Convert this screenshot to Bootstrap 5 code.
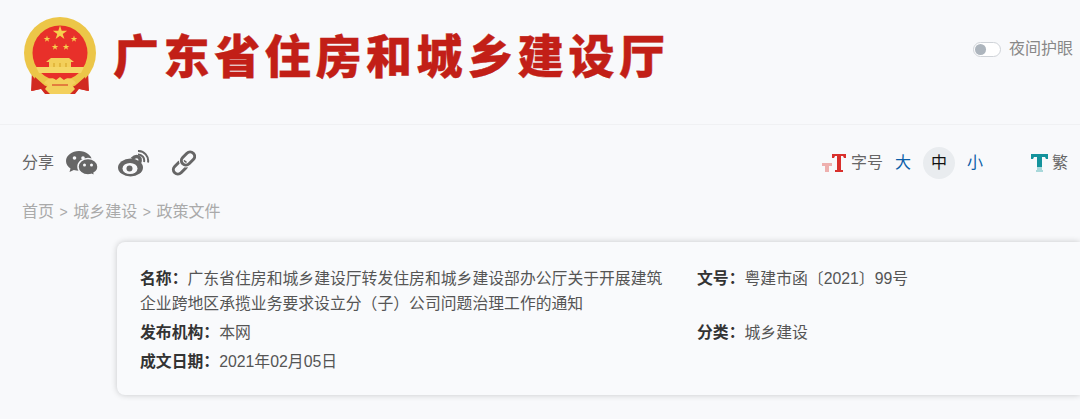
<!DOCTYPE html>
<html lang="zh-CN">
<head>
  <meta charset="UTF-8">
  <title>广东省住房和城乡建设厅</title>
  <meta name="viewport" content="width=device-width, initial-scale=1">
  <link href="https://cdn.jsdelivr.net/npm/bootstrap@5.3.3/dist/css/bootstrap.min.css" rel="stylesheet">
  <script src="https://cdn.jsdelivr.net/npm/bootstrap@5.3.3/dist/js/bootstrap.bundle.min.js"></script>
  <style>
    html, body { height: 100%; overflow: hidden; }
    body { background: #f8f9fb; font-family: "Liberation Sans", "Noto Sans CJK SC", sans-serif; font-size: 16px; color: #555; }
    .site-head { height: 125px; padding: 17px 7px 0 23px; border-bottom: 1px solid #f0f1f3; }
    .site-title { margin: 0 0 6px 16px; font-family: "Noto Sans CJK SC", sans-serif; font-size: 46px; font-weight: 900; line-height: 70px; letter-spacing: 4.6px; color: #c21f17; -webkit-text-stroke: .4px #c21f17; white-space: nowrap; }
    .night-switch { margin: 22px 0 0; padding: 0; min-height: 0; color: #888; line-height: 20px; }
    .night-switch .form-check-input { float: none; width: 28px; height: 15px; margin: 0 8px 0 0; background-color: #fff; border-color: #cfd3d8;
      --bs-form-switch-bg: url("data:image/svg+xml,%3csvg xmlns='http://www.w3.org/2000/svg' viewBox='-4 -4 8 8'%3e%3ccircle r='3.4' fill='%23adb5bd'/%3e%3c/svg%3e"); }
    .tool-row { height: 74px; padding: 2px 12px 0 22px; }
    .share-txt { color: #666; margin-right: 12px; }
    .share-icons { gap: 20px; }
    .tool-t { color: #666; }
    .size-link { width: 32px; height: 32px; line-height: 32px; text-align: center; border-radius: 50%; color: #0b5ea8; text-decoration: none; }
    .size-on { background: #e9ecef; color: #111; }
    .trad-icon { margin-left: 40px; }
    .crumb-row { padding-left: 22px; height: 24px; line-height: 26px; color: #aaa; }
    .crumb-sep { font-size: 14px; margin: 0 5.500px; }
    .doc-card { margin: 19px 0 0 117px; padding: 24px 0 0 23px; height: 153px; background: #f9fafc; border: 0; border-radius: 8px 0 0 8px; box-shadow: 0 0 6px rgba(0, 0, 0, .2); font-size: 15.830px; }
    .doc-cell { width: 557px; flex: none; padding-right: 30px; line-height: 25px; color: #555; }
    .doc-side { flex: 1; line-height: 25px; color: #555; }
    .doc-cell b, .doc-side b { color: #333; font-weight: 700; }
    .doc-line { margin-bottom: 4px; }
  </style>
</head>
<body>

  <header class="site-head d-flex justify-content-between align-items-start">
    <div class="d-flex align-items-center">
      <svg width="74" height="78" viewBox="0 0 74 78">
        <defs><polygon id="emblemStar" points="0,-1 .2245,-.309 .951,-.309 .363,.118 .588,.809 0,.382 -.588,.809 -.363,.118 -.951,-.309 -.2245,-.309" fill="#f6d04d"/></defs>
        <path d="M9 54 L8 74 L18 72 L22 77 H52 L56 72 L66 74 L65 54 Z" fill="#d22a20"/>
        <circle cx="37" cy="36" r="36" fill="#ecc648"/>
        <circle cx="37" cy="36" r="27.500" fill="#e8302a"/>
        <use href="#emblemStar" transform="translate(37 16) scale(7.500)"/>
        <use href="#emblemStar" transform="translate(24 22) scale(3.500)"/>
        <use href="#emblemStar" transform="translate(51 22) scale(3.500)"/>
        <use href="#emblemStar" transform="translate(32 30) scale(3.500)"/>
        <use href="#emblemStar" transform="translate(43 30) scale(3.500)"/>
        <path d="M23 45 L28 41 H46 L51 45 L48 45 V50 H26 V45 Z" fill="#f3cf5a"/>
        <path d="M31 46V50M37 46V50M43 46V50" stroke="#d9a92c" stroke-width="1.200" fill="none"/>
        <path d="M13 50 H61 L58 56 H16 Z" fill="#f5d768"/>
        <path d="M12 60 L21 68 L17 72 L9 74 Z M62 60 L53 68 L57 72 L65 74 Z" fill="#d22a20"/>
        <path d="M21 66 C24 61 30 60 33 63 L37 60 L41 63 C44 60 50 61 53 66 L49 68 L52 72 L47 77 H27 L22 72 L25 68 Z" fill="#f3d05c"/>
        <path d="M29 68 H45" stroke="#d22a20" stroke-width="1" fill="none"/>
      </svg>
      <h1 class="site-title">广东省住房和城乡建设厅</h1>
    </div>
    <div class="form-check form-switch night-switch d-flex align-items-center">
      <input class="form-check-input" type="checkbox" role="switch" id="nightMode">
      <label class="form-check-label" for="nightMode">夜间护眼</label>
    </div>
  </header>

  <div class="tool-row d-flex justify-content-between align-items-center">
    <div class="d-flex align-items-center">
      <span class="share-txt">分享</span>
      <div class="share-icons d-flex align-items-center">
        <svg width="32" height="26" viewBox="0 0 32 26">
          <path d="M13 1C6 1 0 5.500 0 11c0 3 1.800 5.700 4.500 7.500L3.500 22l4.300-2c1.600.5 3.400.8 5.200.8 7 0 13-4.300 13-9.800S20 1 13 1z" fill="#666"/>
          <path d="M22 8.500c-5.500 0-10 3.700-10 8.200s4.500 8.200 10 8.200c1.200 0 2.300-.2 3.400-.5l3.600 1.600-.9-3c2.400-1.500 3.900-3.700 3.900-6.300 0-4.500-4.500-8.200-10-8.200z" fill="#666" stroke="#f8f9fb" stroke-width="1.500"/>
          <circle cx="8.500" cy="8" r="1.800" fill="#f8f9fb"/><circle cx="17" cy="8" r="1.800" fill="#f8f9fb"/>
          <circle cx="18.500" cy="15" r="1.500" fill="#f8f9fb"/><circle cx="25.500" cy="15" r="1.500" fill="#f8f9fb"/>
        </svg>
        <svg width="32" height="27" viewBox="0 0 32 27">
          <ellipse cx="12.500" cy="17.500" rx="12.500" ry="9" fill="#666"/>
          <path d="M14 9 C18 5 24 6 21.500 13" fill="none" stroke="#666" stroke-width="3.500"/>
          <ellipse cx="12" cy="18.500" rx="7.500" ry="5.500" fill="#f8f9fb"/>
          <circle cx="11.500" cy="18.500" r="3" fill="#666"/>
          <path d="M20 4.500a6 6 0 0 1 6 7.500M20 1a9.800 9.800 0 0 1 10 11.500" fill="none" stroke="#666" stroke-width="2"/>
        </svg>
        <svg width="26" height="26" viewBox="-1 0 26 26" fill="none" stroke-width="3">
          <rect x="1.500" y="13" width="15" height="9" rx="4.500" transform="rotate(-45 9 17.500)" stroke="#666"/>
          <rect x="9.500" y="4" width="15" height="9" rx="4.500" transform="rotate(-45 17 8.500)" stroke="#f8f9fb" stroke-width="5"/>
          <rect x="9.500" y="4" width="15" height="9" rx="4.500" transform="rotate(-45 17 8.500)" stroke="#666"/>
        </svg>
      </div>
    </div>
    <div class="d-flex align-items-center">
      <svg width="25" height="18" viewBox="0 0 25 18" class="me-1">
        <path d="M0 9H10V12H7V18H3V12H0Z" fill="#eeb0ae"/>
        <path d="M10 0H24V4H22L21 2H19V16H21V18H13V16H15V2H13L12 4H10Z" fill="#d9302c"/>
      </svg>
      <span class="tool-t">字号</span>
      <a class="size-link ms-1" href="#">大</a>
      <a class="size-link size-on mx-1" href="#">中</a>
      <a class="size-link" href="#">小</a>
      <svg width="17" height="18" viewBox="0 0 17 18" class="trad-icon me-1">
        <path d="M0 0H17V5H15L14 3H11V13H6V3H3L2 5H0Z" fill="#14939c"/>
        <path d="M6 13H11V16H12V18H5V16H6Z" fill="#a8d8da"/>
      </svg>
      <span class="tool-t">繁</span>
    </div>
  </div>

  <nav class="crumb-row">首页<span class="crumb-sep">&gt;</span>城乡建设<span class="crumb-sep">&gt;</span>政策文件</nav>

  <section class="card doc-card">
    <div class="d-flex doc-line">
      <div class="doc-cell"><b>名称：</b>广东省住房和城乡建设厅转发住房和城乡建设部办公厅关于开展建筑企业跨地区承揽业务要求设立分（子）公司问题治理工作的通知</div>
      <div class="doc-side"><b>文号：</b>粤建市函〔2021〕99号</div>
    </div>
    <div class="d-flex doc-line">
      <div class="doc-cell"><b>发布机构：</b>本网</div>
      <div class="doc-side"><b>分类：</b>城乡建设</div>
    </div>
    <div class="d-flex doc-line">
      <div class="doc-cell"><b>成文日期：</b>2021年02月05日</div>
    </div>
  </section>

</body>
</html>
